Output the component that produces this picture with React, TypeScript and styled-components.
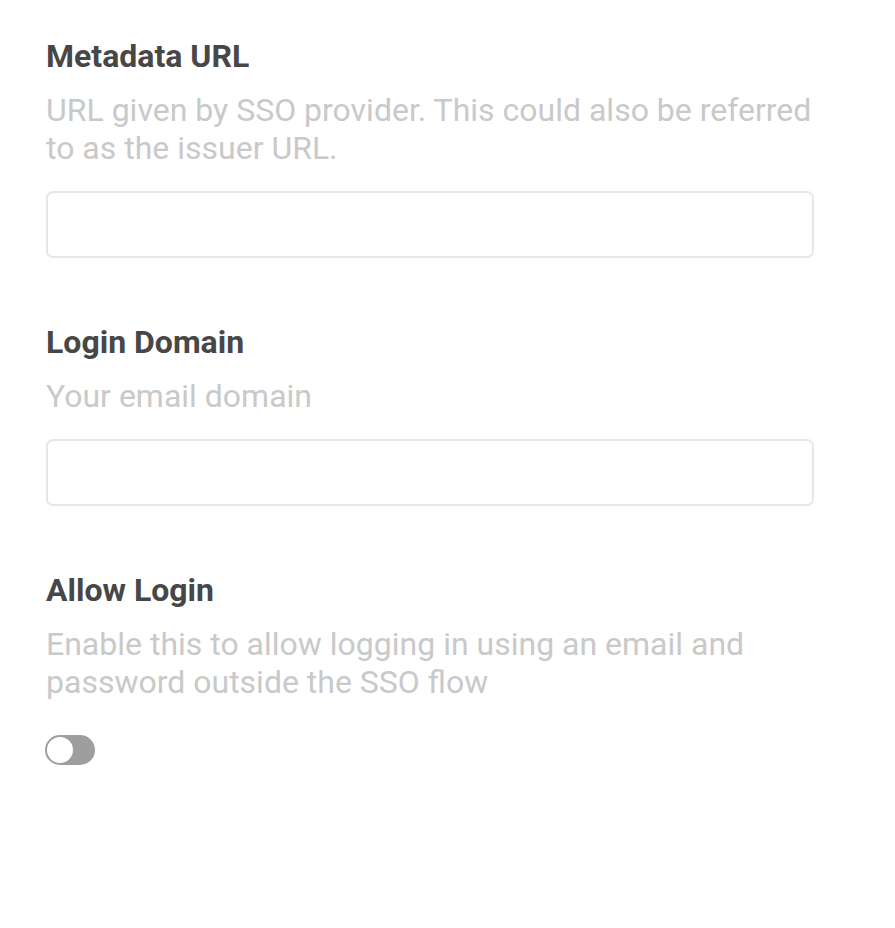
import React, { useState } from "react";
import styled, { createGlobalStyle } from "styled-components";

const Global = createGlobalStyle`
  html, body { margin: 0; padding: 0; background: #ffffff; }
  body { font-family: Roboto, "Liberation Sans", Arial, sans-serif; }
  * { box-sizing: border-box; }
`;

const Page = styled.div`
  display: flex;
  flex-direction: column;
  padding: 36px 0 0 46px;
  width: 814px;
`;

const Field = styled.div<{ $gapBefore?: number }>`
  display: flex;
  flex-direction: column;
  margin-top: ${(p) => p.$gapBefore ?? 0}px;
`;

const Title = styled.div`
  font-size: 32px;
  line-height: 40px;
  font-weight: 700;
  color: #474747;
`;

const Desc = styled.div`
  margin-top: 15px;
  font-size: 32px;
  line-height: 38px;
  font-weight: 400;
  color: #c9c9c9;
`;

const Input = styled.input`
  margin-top: 24px;
  width: 768px;
  height: 67px;
  border: 2px solid #e6e6e6;
  border-radius: 7px;
  background: #ffffff;
  font-family: inherit;
  font-size: 32px;
  padding: 0 16px;
  outline: none;
`;

const Toggle = styled.button<{ $on: boolean }>`
  margin-top: 34px;
  width: 50px;
  height: 30px;
  border-radius: 15px;
  border: none;
  padding: 0;
  background: ${(p) => (p.$on ? "#4a90e2" : "#9e9e9e")};
  position: relative;
  cursor: pointer;
  align-self: flex-start;
  margin-left: -1px;
`;

const Knob = styled.span<{ $on: boolean }>`
  position: absolute;
  top: 2px;
  left: ${(p) => (p.$on ? "22px" : "2px")};
  width: 26px;
  height: 26px;
  border-radius: 50%;
  background: #ffffff;
`;

export default function App() {
  const [on, setOn] = useState(false);
  return (
    <>
      <Global />
      <Page>
        <Field>
          <Title>Metadata URL</Title>
          <Desc>
            URL given by SSO provider. This could also be referred
            <br />
            to as the issuer URL.
          </Desc>
          <Input type="text" />
        </Field>
        <Field $gapBefore={64}>
          <Title>Login Domain</Title>
          <Desc>Your email domain</Desc>
          <Input type="text" />
        </Field>
        <Field $gapBefore={64}>
          <Title>Allow Login</Title>
          <Desc>
            Enable this to allow logging in using an email and
            <br />
            password outside the SSO flow
          </Desc>
          <Toggle $on={on} onClick={() => setOn(!on)} aria-label="Allow Login">
            <Knob $on={on} />
          </Toggle>
        </Field>
      </Page>
    </>
  );
}
